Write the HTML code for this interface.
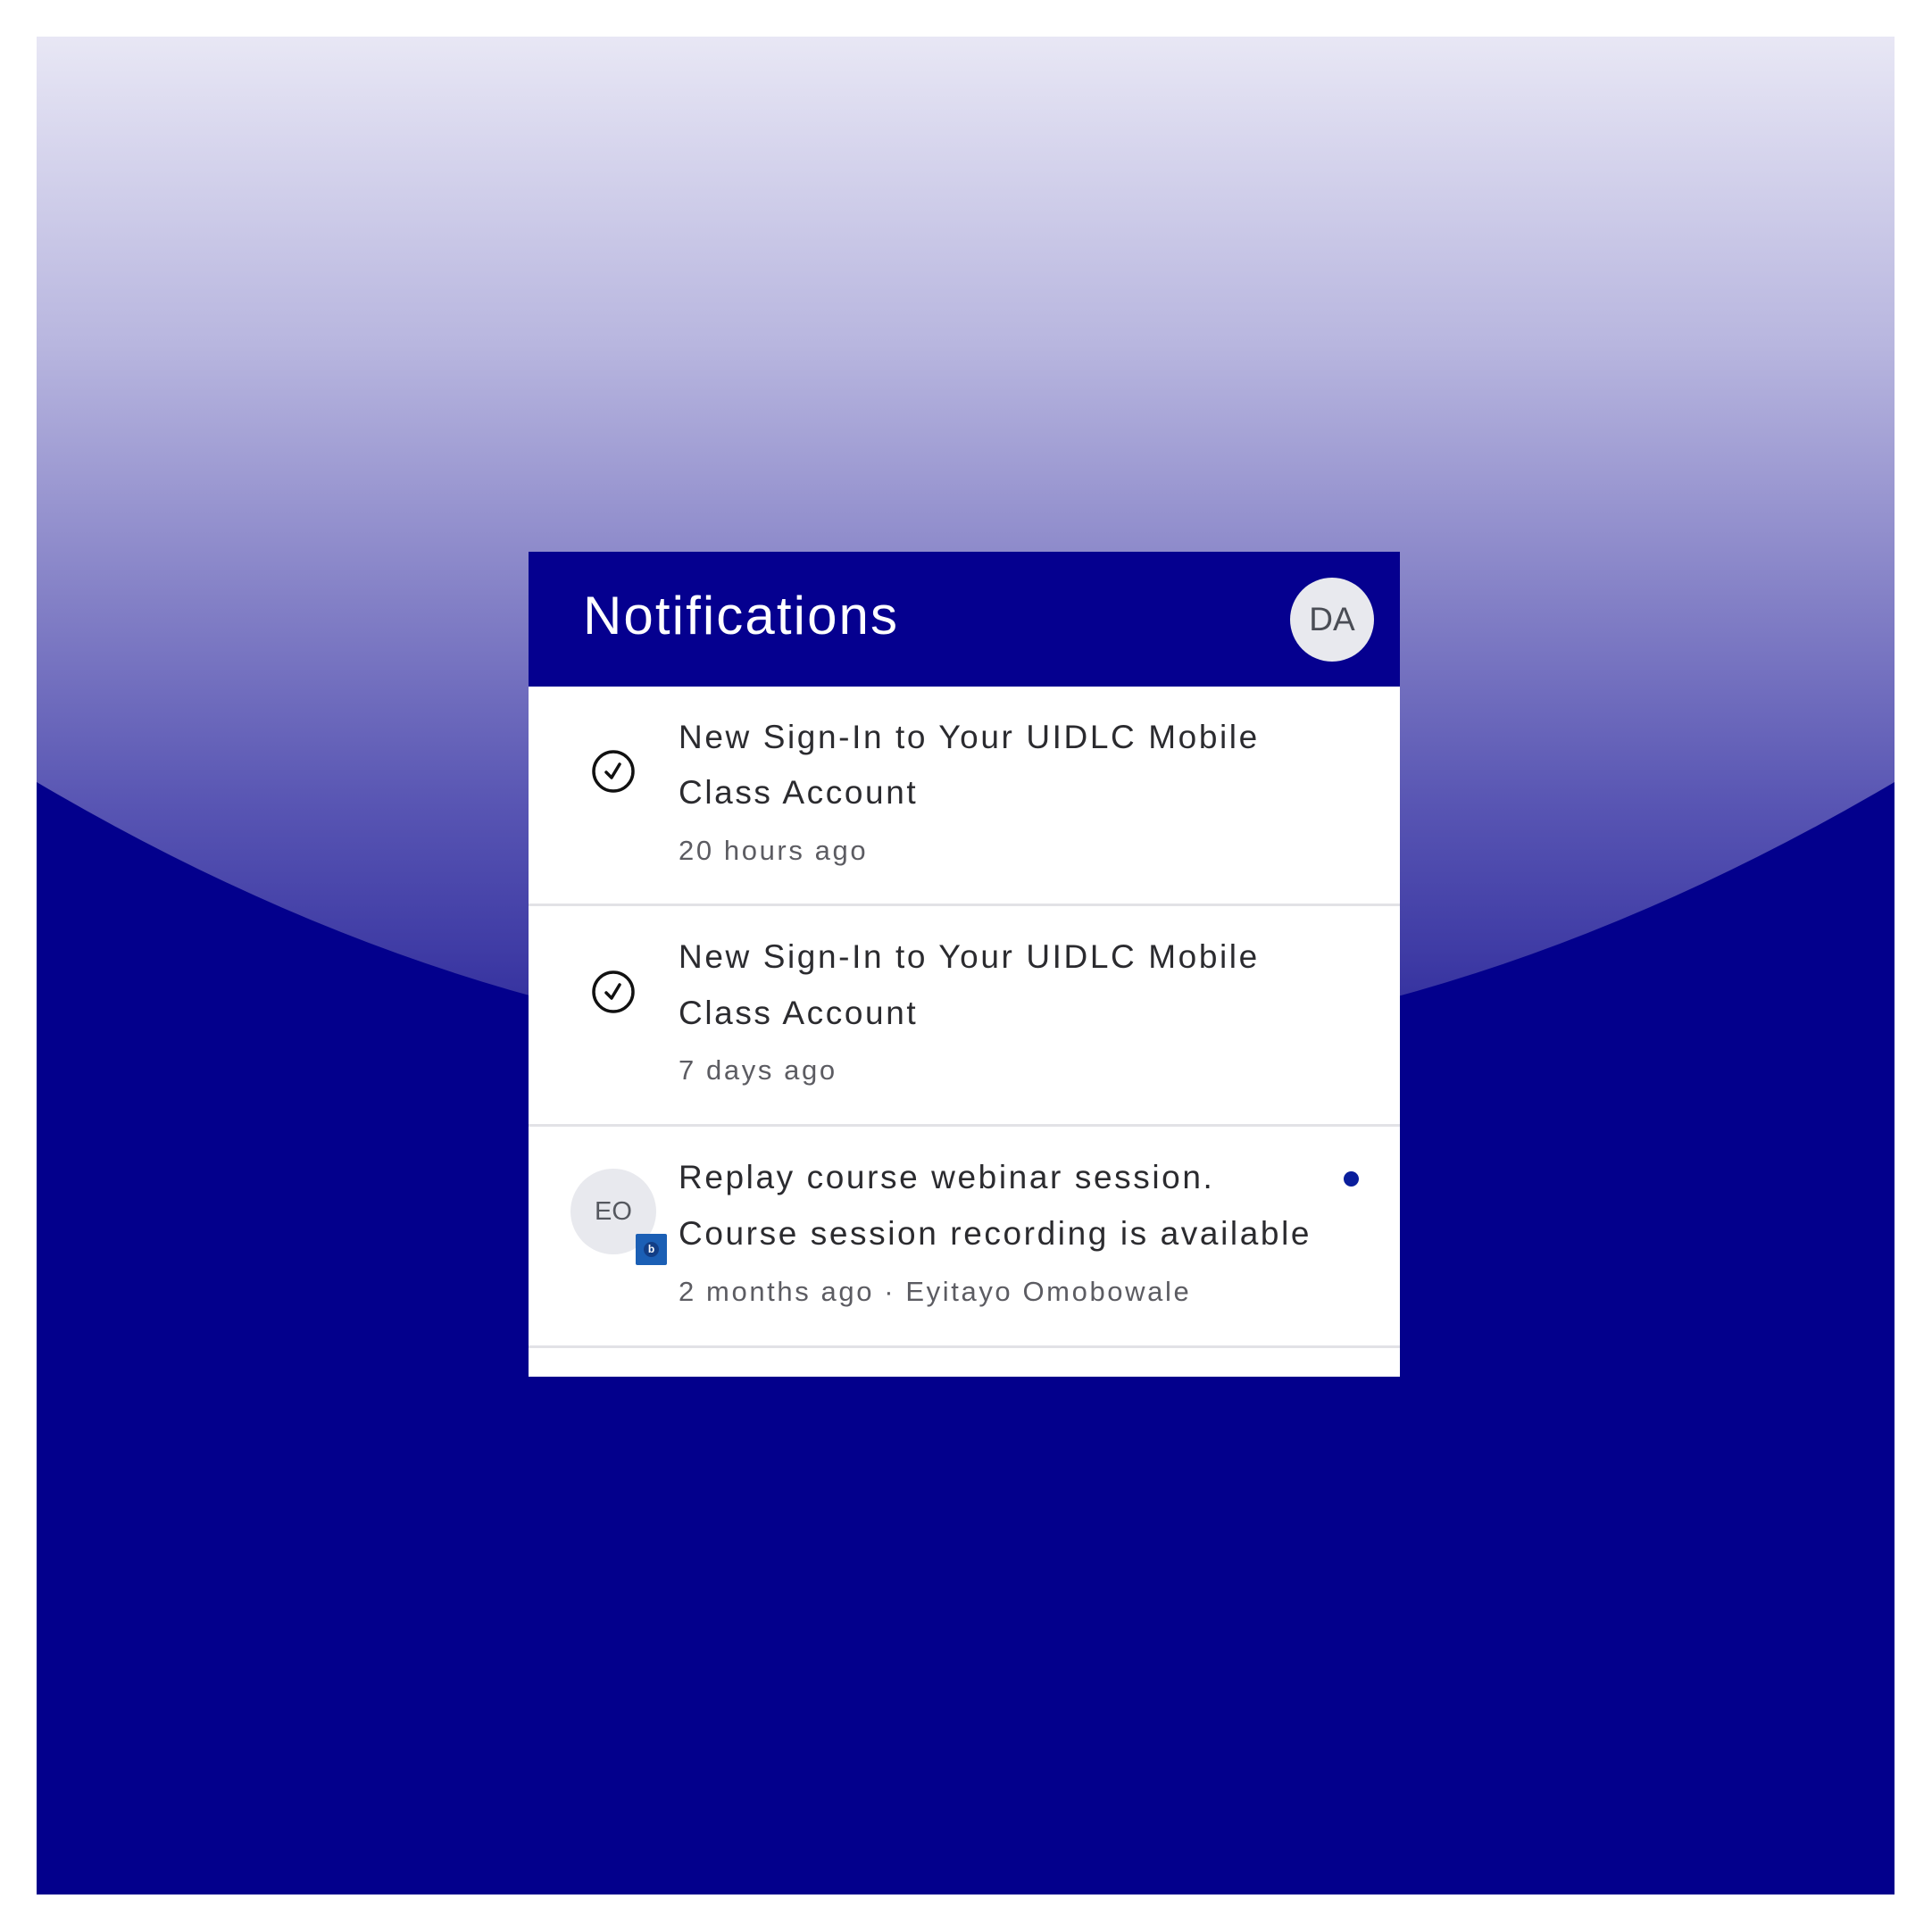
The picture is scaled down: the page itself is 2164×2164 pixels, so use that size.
<!DOCTYPE html>
<html><head><meta charset="utf-8"><style>
html,body{margin:0;padding:0;background:#fff;}
body{width:2164px;height:2164px;position:relative;overflow:hidden;font-family:"Liberation Sans",sans-serif;}
.bg{position:absolute;left:0;top:0;}
.card{position:absolute;left:592px;top:618px;width:976px;height:924px;background:#fff;}
.hdr{position:absolute;left:0;top:0;width:976px;height:151px;background:#05008f;}
.title{position:absolute;left:61px;top:42px;font-size:60px;color:#fff;letter-spacing:2.1px;line-height:60px;}
.da{position:absolute;left:853px;top:29px;width:94px;height:94px;border-radius:50%;background:#e8e9ee;color:#4a4d55;font-size:37px;line-height:94px;text-align:center;}
.row{position:absolute;left:0;width:976px;border-bottom:3px solid #e2e2e6;}
.t{position:absolute;left:168px;font-size:37px;color:#2b2b2f;white-space:nowrap;letter-spacing:2.6px;line-height:40px;}
.s{position:absolute;left:168px;font-size:31px;color:#5c5c62;white-space:nowrap;letter-spacing:2.6px;line-height:34px;}
</style></head><body>
<svg class="bg" width="2164" height="2164">
<defs><linearGradient id="g" x1="0" y1="41" x2="0" y2="1190" gradientUnits="userSpaceOnUse">
<stop offset="0" stop-color="#e8e7f5"/><stop offset="0.3" stop-color="#b8b6df"/><stop offset="0.5" stop-color="#8e8bcb"/><stop offset="0.75" stop-color="#5855b3"/><stop offset="1" stop-color="#2c289a"/></linearGradient></defs>
<rect x="41" y="41" width="2081" height="2081" fill="url(#g)"/>
<path d="M41 876 Q1081 1489 2122 876 L2122 2122 L41 2122 Z" fill="#03008c"/>
</svg>
<div class="card">
<div class="hdr"><div class="title">Notifications</div><div class="da">DA</div></div>
<div class="row" style="top:151px;height:243px;">
<svg style="position:absolute;left:69px;top:69px" width="52" height="52"><circle cx="26" cy="26" r="22" fill="none" stroke="#111" stroke-width="3.5"/><path d="M18 27 L24 33 L33 18" fill="none" stroke="#111" stroke-width="3.5" stroke-linecap="round" stroke-linejoin="round"/></svg>
<div class="t" style="top:37px">New Sign-In to Your UIDLC Mobile</div>
<div class="t" style="top:99px">Class Account</div>
<div class="s" style="top:167px">20 hours ago</div>
</div>
<div class="row" style="top:397px;height:244px;">
<svg style="position:absolute;left:69px;top:70px" width="52" height="52"><circle cx="26" cy="26" r="22" fill="none" stroke="#111" stroke-width="3.5"/><path d="M18 27 L24 33 L33 18" fill="none" stroke="#111" stroke-width="3.5" stroke-linecap="round" stroke-linejoin="round"/></svg>
<div class="t" style="top:37px">New Sign-In to Your UIDLC Mobile</div>
<div class="t" style="top:100px">Class Account</div>
<div class="s" style="top:167px">7 days ago</div>
</div>
<div class="row" style="top:644px;height:245px;">
<div style="position:absolute;left:47px;top:47px;width:96px;height:96px;border-radius:50%;background:#e8e9ee;color:#55585f;font-size:29px;line-height:96px;text-align:center;">EO</div>
<div style="position:absolute;left:120px;top:120px;width:35px;height:35px;background:#1b5fb5;border-radius:2px;"><div style="position:absolute;left:9px;top:9px;width:17px;height:17px;border-radius:50%;background:#123e86;color:#fff;font-size:12px;line-height:17px;text-align:center;font-weight:bold;">b</div></div>
<div style="position:absolute;left:913px;top:50px;width:17px;height:17px;border-radius:50%;background:#0a1e9c;"></div>
<div class="t" style="top:37px">Replay course webinar session.</div>
<div class="t" style="top:100px">Course session recording is available</div>
<div class="s" style="top:168px">2 months ago · Eyitayo Omobowale</div>
</div>
</div>
</body></html>
